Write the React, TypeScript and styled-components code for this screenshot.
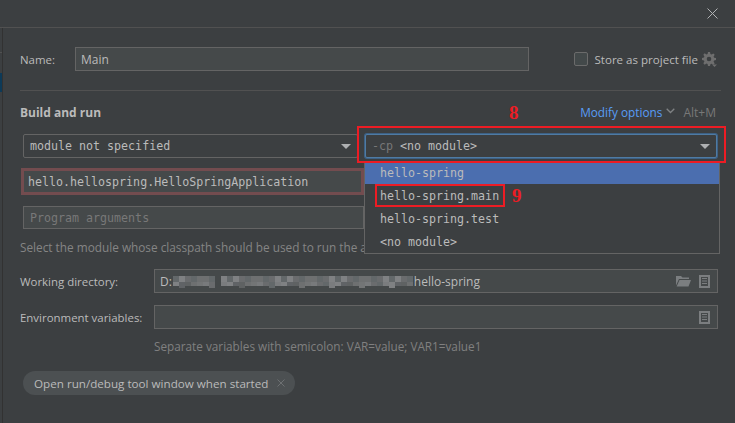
import React from "react";
import styled, { createGlobalStyle } from "styled-components";

const Global = createGlobalStyle`
  html, body { margin: 0; padding: 0; background: #3c3f41; }
  #root { width: 735px; height: 423px; overflow: hidden; }
  * { box-sizing: border-box; }
`;

const sans = `"Open Sans", "Noto Sans", sans-serif`;
const mono = `"DejaVu Sans Mono", "Liberation Mono", monospace`;

const Dialog = styled.div`
  width: 735px; height: 423px; background: #3c3f41; color: #bbbbbb;
  font: 12px ${sans}; display: flex; flex-direction: column; overflow: hidden;
`;
const TitleBar = styled.div`
  height: 28px; flex: none; border-bottom: 1px solid #515151; display: flex;
  align-items: flex-start; justify-content: flex-end; padding: 8px 17px 0 0;
`;
const Body = styled.div`flex: 1; display: flex; min-height: 0;`;
const Sidebar = styled.div`
  width: 3px; flex: none; border-right: 1px solid #323232; background: #3c3f41;
  display: flex; flex-direction: column;
`;
const SideLine = styled.div`height: 1px; margin-top: 24px; background: #515151;`;
const SideSelected = styled.div`height: 19px; margin-top: 20px; background: #0d3a58;`;
const Content = styled.div`
  position: relative; flex: 1; padding: 19px 14px 0 17px; display: flex; flex-direction: column;
`;
const Row = styled.div`display: flex; align-items: center;`;
const Label = styled.span<{ $w: number }>`width: ${p => p.$w}px; flex: none; color: #bbbbbb; font-size: 11.45px; white-space: nowrap;`;
const TextField = styled.div<{ $w?: number }>`
  height: 24px; width: ${p => (p.$w ? p.$w + "px" : "auto")}; flex: ${p => (p.$w ? "none" : 1)};
  background: #45494a; border: 1px solid #646464; display: flex; align-items: center;
  padding: 0 5px; font-size: 12px; color: #bbbbbb; white-space: pre;
`;
const Store = styled.div`margin-left: auto; display: flex; align-items: center; padding-right: 4px;`;
const Check = styled.span`
  width: 14px; height: 14px; border: 1px solid #6b6b6b; border-radius: 2px; background: #43494a; margin-right: 7px;
`;
const StoreText = styled.span`color: #bbbbbb; font-size: 11.55px; margin-right: 4px;`;
const Separator = styled.div`height: 1px; background: #515151; margin-top: 19px;`;
const Section = styled(Row)`height: 18px; margin-top: 12px;`;
const SectionTitle = styled.span`font-weight: 700; font-size: 12px; color: #bbbbbb;`;
const Annotation = styled.span<{ $x: number; $y: number }>`
  position: absolute; left: ${p => p.$x}px; top: ${p => p.$y}px; color: #ed1c24; z-index: 3;
  font: 700 19px "Liberation Serif", serif; line-height: 18px;
`;
const Modify = styled.div`margin-left: auto; display: flex; align-items: center; padding-right: 5px;`;
const ModifyLink = styled.span`color: #589df6; font-size: 11.8px;`;
const Shortcut = styled.span`color: #787878; font-size: 12px;`;
const ComboRow = styled(Row)`margin-top: 13px; padding-left: 3px; padding-right: 1px; position: relative;`;
const Combo = styled.div<{ $focus?: boolean }>`
  height: 24px; flex: none; width: ${p => (p.$focus ? 352 : 335)}px; margin-left: ${p => (p.$focus ? 7 : 0)}px;
  background: #3c3f41; border: 1px solid ${p => (p.$focus ? "#4f7ba3" : "#646464")}; border-radius: 2px;
  box-shadow: ${p => (p.$focus ? "0 0 0 1px #3d6185" : "none")};
  display: flex; align-items: center; padding: 0 6px; justify-content: space-between;
`;
const Mono = styled.span<{ $c?: string }>`
  font: 11.65px ${mono}; color: ${p => p.$c || "#bbbbbb"}; white-space: pre;
`;
const Arrow = styled.span`
  width: 0; height: 0; border-left: 5px solid transparent; border-right: 5px solid transparent;
  border-top: 5px solid #aeb0b2;
`;
const MainClass = styled.div`
  width: 343px; height: 27px; margin: 10px 0 0 1px; border: 3px solid #734c4f; background: #45494a;
  display: flex; align-items: center; padding-left: 4px;
`;
const ArgsField = styled.div`
  width: 341px; height: 23px; margin: 11px 0 0 3px; border: 1px solid #646464; background: #45494a;
  display: flex; align-items: center; padding-left: 6px;
`;
const HelpText = styled.div`
  color: #858585; font-size: 11.8px; margin-top: 10px; height: 17px; line-height: 17px;
  white-space: nowrap;
`;
const FieldRow = styled(Row)<{ $top: number }>`margin-top: ${p => p.$top}px; padding-right: 3px;`;
const Icons = styled.div`margin-left: auto; display: flex; align-items: center; gap: 8px; padding-right: 2px;`;
const Sep = styled.div`color: #808080; font-size: 11.75px; margin: 9px 0 0 134px; height: 17px; line-height: 17px;`;
const Chip = styled.div`
  width: 272px; height: 24px; margin: 16px 0 0 3px; border-radius: 12px; background: #4c5052;
  display: flex; align-items: center; padding: 0 10px 0 11px; color: #bbbbbb; font-size: 11.65px; white-space: nowrap;
  justify-content: space-between;
`;
const Popup = styled.div`
  position: absolute; left: 361px; top: 135px; width: 356px; height: 91px; background: #3c3f41;
  border: 1px solid #646464; border-top: none; z-index: 2;
`;
const Item = styled.div<{ $sel?: boolean }>`
  height: 23px; display: flex; align-items: center; padding-left: 15px;
  background: ${p => (p.$sel ? "#4b6eaf" : "transparent")};
  &:first-child { height: 21px; padding-bottom: 1px; }
`;
const RedBox = styled.div<{ $x: number; $y: number; $w: number; $h: number }>`
  position: absolute; left: ${p => p.$x}px; top: ${p => p.$y}px; width: ${p => p.$w}px; height: ${p => p.$h}px;
  border: 2px solid #ed1c24; z-index: 3; pointer-events: none;
`;

const Close = () => (
  <svg width="11" height="11" viewBox="0 0 11 11"><path d="M.5.5l10 10M10.5.5l-10 10" stroke="#b0b2b4" strokeWidth="1" fill="none" /></svg>
);
const Gear = () => (
  <svg width="15" height="15" viewBox="0 0 15 15">
    <path fill="#6e6e6e" fillRule="evenodd" d="M6 0h2l.4 2 1.2.5L11.300 1.400l1.400 1.400-1.100 1.700.5 1.200 1.900.4v2l-1.900.4-.5 1.200 1.100 1.700-1.400 1.400-1.700-1.100-1.200.5L8 14H6l-.4-1.900-1.200-.5-1.700 1.100-1.400-1.400 1.100-1.700-.5-1.200L0 8V6l1.900-.4.5-1.200-1.100-1.700 1.400-1.400 1.700 1.100 1.200-.5zM7 4.700a2.300 2.300 0 1 0 0 4.600 2.300 2.300 0 0 0 0-4.600z" />
    <path fill="#6e6e6e" d="M10 12.500h5l-2.500 2.500z" />
  </svg>
);
const ChevronSvg = styled.svg`margin: 0 8px 2px 4px;`;
const Chevron = () => (
  <ChevronSvg width="9" height="6" viewBox="0 0 9 6"><path d="M.7.700L4.500 4.500 8.300.7" stroke="#7f8284" strokeWidth="1.300" fill="none" /></ChevronSvg>
);
const Folder = () => (
  <svg width="15" height="12" viewBox="0 0 15 12">
    <path fill="#7b7e80" d="M0 1h5l1.500 1.500H13V4H3L0 10.500z" />
    <path fill="#7b7e80" d="M3.500 5H15l-2.500 6.500H.7z" />
  </svg>
);
const Doc = () => (
  <svg width="11" height="13" viewBox="0 0 11 13">
    <rect x="1" y="1" width="9" height="11" fill="none" stroke="#7b7e80" strokeWidth="2" />
    <path d="M3 3.500h5M3 6h5M3 8.500h5" stroke="#7b7e80" strokeWidth="1" />
  </svg>
);
const SmallX = () => (
  <svg width="8" height="8" viewBox="0 0 8 8"><path d="M.5.5l7 7M7.500.5l-7 7" stroke="#6d7072" strokeWidth="1" fill="none" /></svg>
);

const shades = ["#6e7071", "#787a7b", "#64686a", "#7f8183", "#5e6264", "#737576", "#6a6c6e", "#7a7c7e", "#606466"];
const columns = Array.from({ length: 40 }, (_, i) => i);
const MosaicSvg = styled.svg`flex: none;`;
const Mosaic = () => (
  <MosaicSvg width="242" height="16" viewBox="0 0 242 16">
    <defs><filter id="soft"><feGaussianBlur stdDeviation="0.7" /></filter></defs>
    <g filter="url(#soft)">
      {columns.map(i =>
        i === 7 ? null : (
          <g key={i}>
            <rect x={i * 6 + 1} y="3" width="6" height="6" fill={shades[(i * i + 2) % shades.length]} />
            <rect x={i * 6 + 1} y="9" width="6" height={i % 5 === 1 ? 6 : 4} fill={shades[(i * 5 + 3) % shades.length]} />
          </g>
        )
      )}
    </g>
  </MosaicSvg>
);

export default function App() {
  return (
    <Dialog>
      <Global />
      <TitleBar><Close /></TitleBar>
      <Body>
        <Sidebar><SideLine /><SideSelected /></Sidebar>
        <Content>
          <Row>
            <Label $w={55}>Name:</Label>
            <TextField $w={454}>Main</TextField>
            <Store>
              <Check />
              <StoreText>Store as project file</StoreText>
              <Gear />
            </Store>
          </Row>
          <Separator />
          <Section>
            <SectionTitle>Build and run</SectionTitle>
            <Modify>
              <ModifyLink>Modify options</ModifyLink>
              <Chevron />
              <Shortcut>Alt+M</Shortcut>
            </Modify>
          </Section>
          <ComboRow>
            <Combo>
              <Mono>module not specified</Mono>
              <Arrow />
            </Combo>
            <Combo $focus>
              <Mono><Mono $c="#787878">-cp</Mono> &lt;no module&gt;</Mono>
              <Arrow />
            </Combo>
          </ComboRow>
          <MainClass><Mono>hello.hellospring.HelloSpringApplication</Mono></MainClass>
          <ArgsField><Mono $c="#787878">Program arguments</Mono></ArgsField>
          <HelpText>Select the module whose classpath should be used to run the a</HelpText>
          <FieldRow $top={13}>
            <Label $w={134}>Working directory:</Label>
            <TextField>
              D:<Mosaic />hello-spring
              <Icons><Folder /><Doc /></Icons>
            </TextField>
          </FieldRow>
          <FieldRow $top={12}>
            <Label $w={134}>Environment variables:</Label>
            <TextField>
              <Icons><Doc /></Icons>
            </TextField>
          </FieldRow>
          <Sep>Separate variables with semicolon: VAR=value; VAR1=value1</Sep>
          <Chip>Open run/debug tool window when started<SmallX /></Chip>
          <Annotation $x={506} $y={76}>8</Annotation>
          <Annotation $x={509} $y={159}>9</Annotation>
          <RedBox $x={354} $y={98} $w={369} $h={37} />
          <Popup>
            <Item $sel><Mono>hello-spring</Mono></Item>
            <Item><Mono>hello-spring.main</Mono></Item>
            <Item><Mono>hello-spring.test</Mono></Item>
            <Item><Mono>&lt;no module&gt;</Mono></Item>
          </Popup>
          <RedBox $x={372} $y={156} $w={130} $h={23} />
        </Content>
      </Body>
    </Dialog>
  );
}
